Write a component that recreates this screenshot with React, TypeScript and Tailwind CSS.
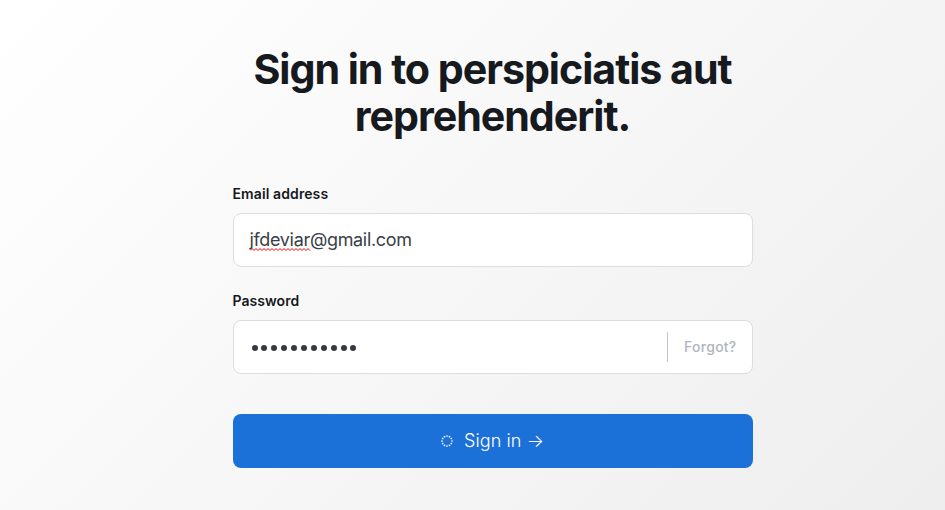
import React from "react";

// A short red wavy line under a misspelled word.
function Squiggle() {
  return (
    <svg className="absolute left-0 top-[18px]" width="61" height="3" viewBox="0 0 61 3" fill="none">
      <path
        d={"M0 2.5" + Array.from({ length: 15 }, () => "l2 -2l2 2").join("")}
        stroke="#f00000"
        strokeWidth="1"
      />
    </svg>
  );
}

function Spinner() {
  return (
    <svg width="12" height="12" viewBox="0 0 12 12" fill="#fff" className="mr-[11px]">
      {Array.from({ length: 12 }, (_, i) => (
        <circle key={i} cx={6 + 5 * Math.cos((i * Math.PI) / 6)} cy={6 + 5 * Math.sin((i * Math.PI) / 6)} r="0.85" />
      ))}
    </svg>
  );
}

export default function App() {
  return (
    <main className="h-[510px] w-[945px] overflow-hidden bg-linear-[135deg,#ffffff,#eeeeee] pl-[232.5px] font-[Inter,sans-serif] text-[#16191d]">
      <form className="flex w-[520px] flex-col pt-[46px]">
        <h1 className="text-center text-[41.2px] leading-[47px] font-bold tracking-[-1.04px] whitespace-nowrap">
          Sign in to perspiciatis aut
          <br />
          reprehenderit.
        </h1>
        <label className="mt-[44px] text-sm leading-5 font-semibold tracking-[0.1px]">Email address</label>
        <div className="mt-[9px] flex h-[54px] items-center rounded-lg border border-[#dddddd] bg-white px-4 text-lg tracking-[-0.33px] text-[#3a4047]">
          <span className="relative leading-5">
            jfdeviar
            <Squiggle />
          </span>
          <span className="leading-5">@gmail.com</span>
        </div>
        <label className="mt-[24px] text-sm leading-5 font-semibold tracking-[0.05px]">Password</label>
        <div className="mt-[9px] flex h-[54px] items-center rounded-lg border border-[#dddddd] bg-white px-4">
          <span className="flex gap-[3.9px] pl-[2px] pt-[2px]">
            {Array.from({ length: 11 }, (_, i) => (
              <i key={i} className="size-[6px] rounded-full bg-[#343a40]" />
            ))}
          </span>
          <span className="-mr-px ml-auto flex h-[30px] items-center border-l border-[#c4c8cc] pl-4 text-sm font-medium tracking-[0.25px] text-[#adb5bd]">
            Forgot?
          </span>
        </div>
        <button className="mt-[40px] flex h-[54px] items-center justify-center rounded-lg bg-[#1c71d8] text-lg font-light tracking-[0.1px] text-white">
          <Spinner />
          Sign in →
        </button>
      </form>
    </main>
  );
}
